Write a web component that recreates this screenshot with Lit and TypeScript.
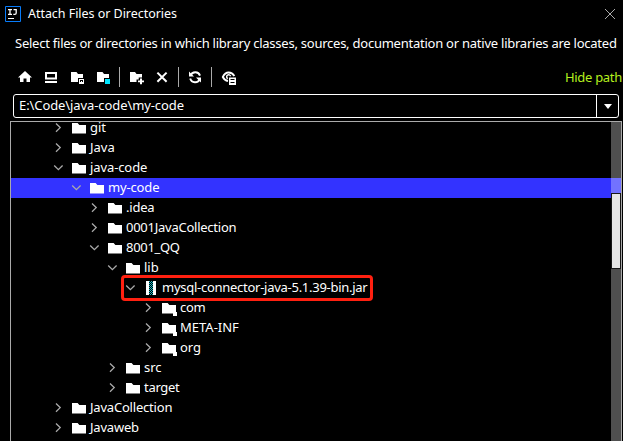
import { LitElement, html, css, svg } from "lit";
import { customElement } from "lit/decorators.js";
import { classMap } from "lit/directives/class-map.js";

type Kind = "folder" | "package" | "jar";
interface Node { name: string; depth: number; open?: boolean; kind?: Kind; selected?: boolean; spacing?: number }

const nodes: Node[] = [
  { name: "git", depth: 0 },
  { name: "Java", depth: 0, spacing: 0 },
  { name: "java-code", depth: 0, open: true, spacing: -0.1 },
  { name: "my-code", depth: 1, open: true, selected: true, spacing: -0.15 },
  { name: ".idea", depth: 2, spacing: -0.2 },
  { name: "0001JavaCollection", depth: 2, spacing: -0.25 },
  { name: "8001_QQ", depth: 2, open: true, spacing: -0.3 },
  { name: "lib", depth: 3, open: true },
  { name: "mysql-connector-java-5.1.39-bin.jar", depth: 4, open: true, kind: "jar", spacing: -0.27 },
  { name: "com", depth: 5, kind: "package", spacing: -0.3 },
  { name: "META-INF", depth: 5, kind: "package", spacing: 0 },
  { name: "org", depth: 5, kind: "package" },
  { name: "src", depth: 3 },
  { name: "target", depth: 3, spacing: -0.3 },
  { name: "JavaCollection", depth: 0, spacing: -0.2 },
  { name: "Javaweb", depth: 0, spacing: -0.2 },
];

const folderShape = svg`<path fill="#fff" d="M1 3H6.6L8.4 5H15V13.5H1z"/>`;

const glyphs = {
  home: svg`<path fill="#fff" d="M8 2L15 8.6H13V13H9.5V9.5H6.5V13H3V8.6H1z"/>`,
  desktop: svg`<path fill="#fff" fill-rule="evenodd" d="M2 3H14V10.5H2zM4 5V8.6H12V5z"/><path fill="#fff" d="M2 12H14V14H2z"/>`,
  project: svg`<path fill="#fff" d="M2 3H7.5L9 5H14V9H9V13H2z"/><path fill="#fff" d="M10 10H15V15H10z"/><path fill="#000" d="M11 11H14V13H11z"/><path fill="#fff" d="M12 12H13V13H12z"/>`,
  module: svg`<path fill="#fff" d="M2 3H7.5L9 5H14V9H9V13H2z"/><path fill="#00e5ff" d="M10 10H15V15H10z"/>`,
  add: svg`<path fill="#fff" d="M2 3H7L8.5 5H14V8.5H10.7V10.5H8.5V13H2z"/><path fill="#fff" d="M12 9.5H14V11.5H16V13.2H14V15.2H12V13.2H10V11.5H12z"/>`,
  remove: svg`<path stroke="#fff" stroke-width="2" d="M3.4 3.6L12.6 12.8M12.6 3.6L3.4 12.8"/>`,
  refresh: svg`<g fill="none" stroke="#fff" stroke-width="1.9"><path d="M3.6 6.4A5 4.9 0 0 1 13 6.6M12.8 9.9A5 4.9 0 0 1 3.2 9.6"/></g><path fill="#fff" d="M2 2.5V7.5H7zM14 13.6V8.6H9z"/>`,
  hidden: svg`<path fill="none" stroke="#fff" stroke-width="1.8" d="M8 12C5.5 11.5 3.8 10 2.8 8C4.3 4.8 6.5 3.5 8.6 3.5S13 4.7 14.4 7"/><path fill="none" stroke="#fff" stroke-width="1.5" d="M7.8 9.6A2 2 0 1 1 10.6 7.3"/><path fill="#fff" d="M9 8.5H16V16H9z"/><path stroke="#000" d="M10.5 10.5H14.5M10.5 13.5H14.5"/>`,
};

const icon = (body: unknown) => html`<svg class="icon" width="16" height="16" viewBox="0 0 16 16">${body}</svg>`;

const nodeIcon = (kind: Kind = "folder") => {
  if (kind === "jar")
    return icon(svg`<path fill="#fff" d="M3 1H6V15H3zM10 1H13V15H10z"/>
      <path stroke="#19bcc8" stroke-width="1" stroke-dasharray="1 1" d="M6.5 1V15M8.5 1V15"/>
      <path stroke="#19bcc8" stroke-width="1" stroke-dasharray="1 1" stroke-dashoffset="1" d="M7.5 1V15M9.5 1V15"/>`);
  if (kind === "package")
    return icon(svg`<path fill="#fff" d="M1 3H6.6L8.4 5H15V12H16V16H12V13.5H1z"/>`);
  return icon(folderShape);
};

@customElement("tree-row")
class TreeRow extends LitElement {
  static properties = { node: { attribute: false } };
  declare node: Node;
  static styles = css`
    :host { display: block; height: 20px; flex: none; }
    .row { display: flex; align-items: center; height: 20px; }
    .selected { background: #3333ff; }
    .arrow { flex: none; margin-right: 5px; }
    .icon { flex: none; margin-right: 3px; overflow: visible; }
    .name { line-height: 20px; padding-bottom: 2px; white-space: pre; }
  `;
  render() {
    const n = this.node;
    return html`<div class=${classMap({ row: true, selected: !!n.selected })} style="padding-left:${39 + n.depth * 18}px">
      <svg class="arrow" width="16" height="16" viewBox="0 0 16 16">
        <path fill="none" stroke="#aaa" stroke-width="1.3" d=${n.open ? "M4.2 5.5L8.4 9.7L12.6 5.5" : "M6 3.5L10.2 7.6L6 11.7"} />
      </svg>${nodeIcon(n.kind)}<span class="name" style="letter-spacing:${n.spacing ?? 0}px">${n.name}</span>
    </div>`;
  }
}

@customElement("app-root")
class AppRoot extends LitElement {
  static styles = css`
    :host {
      display: flex; flex-direction: column; position: relative; box-sizing: border-box;
      width: 623px; height: 441px; overflow: hidden; background: #000; color: #fff;
      font: 13px "Noto Sans", "Open Sans", sans-serif;
    }
    .title { display: flex; align-items: center; height: 27px; padding: 0 7px 0 5px; }
    .title h1 { flex: 1; margin: 0 0 0 7px; font-size: 12.5px; font-weight: 400; white-space: pre; letter-spacing: -0.04px; }
    .hint { height: 34px; line-height: 33px; padding-left: 15px; white-space: pre; letter-spacing: -0.24px; }
    .tools { display: flex; align-items: center; height: 31px; padding: 0 1px 2px 17px; }
    .tools .icon { margin-right: 10px; overflow: visible; }
    .sep { width: 1px; height: 20px; background: #aaa; margin: 0 8px 0 -2px; }
    .hide { margin-left: auto; color: #b4f01e; white-space: pre; letter-spacing: -0.3px; }
    .path { display: flex; box-sizing: border-box; width: 606px; height: 24px; margin-left: 13px; border: 1px solid #fff; border-radius: 3px; flex: none; }
    .path span { flex: 1; padding-left: 5px; line-height: 21px; letter-spacing: -0.09px; }
    .drop { display: flex; align-items: center; justify-content: center; width: 21px; border-left: 1px solid #fff; }
    .tree { position: relative; flex: 1; min-height: 0; margin: 3px 1px 0 10px; border: 1px solid #aaa; border-bottom: 0; overflow: hidden; }
    .rows { display: flex; flex-direction: column; margin-top: -4px; }
    .track { position: absolute; top: 0; right: 0; bottom: 0; width: 10px; background: rgba(255,255,255,.31); }
    .thumb { position: absolute; box-sizing: border-box; top: 71px; left: 0; width: 10px; height: 76px; background: #e6e6e6; border: 1px solid #181818; }
    .mark { position: absolute; box-sizing: border-box; left: 121px; top: 275px; width: 252px; height: 26px; border: 3px solid #ff2010; border-radius: 4px; }
  `;
  render() {
    const sep = html`<i class="sep"></i>`;
    return html`
      <header class="title">
        <svg width="16" height="16" viewBox="0 0 16 16"><path fill="#000" stroke="#087cfa" d="M.5.5H15.5V15.5H.5z"/>
          <path fill="none" stroke="#fff" stroke-width="1.3" d="M3 3.6H7M5 3.6V8.4M3 8.4H7M8.5 3.6H11.2V7Q11.2 8.4 9.8 8.4H8.3"/><path fill="#fff" d="M3 12H9V13H3z"/></svg>
        <h1>Attach Files or Directories</h1>
        <svg width="12" height="12" viewBox="0 0 12 12"><path stroke="#aaa" d="M1 1L11 11M11 1L1 11"/></svg>
      </header>
      <div class="hint">Select files or directories in which library classes, sources, documentation or native libraries are located</div>
      <div class="tools">
        ${icon(glyphs.home)}${icon(glyphs.desktop)}${icon(glyphs.project)}${icon(glyphs.module)}${sep}
        ${icon(glyphs.add)}${icon(glyphs.remove)}${sep}${icon(glyphs.refresh)}${sep}${icon(glyphs.hidden)}
        <span class="hide">Hide path</span>
      </div>
      <div class="path"><span>E:\\Code\\java-code\\my-code</span><div class="drop"><svg width="8" height="5"><path fill="#fff" d="M0 0H8L4 5z"/></svg></div></div>
      <div class="tree">
        <div class="rows">${nodes.map((n) => html`<tree-row .node=${n}></tree-row>`)}</div>
        <div class="track"><div class="thumb"></div></div>
      </div>
      <div class="mark"></div>`;
  }
}
